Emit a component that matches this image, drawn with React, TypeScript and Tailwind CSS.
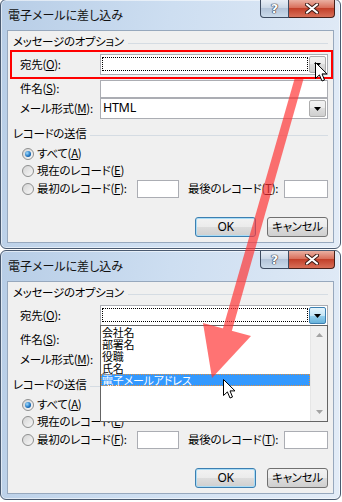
import React from 'react';

const jp = "font-['Noto_Sans_CJK_JP','Noto_Sans',sans-serif] [font-feature-settings:'palt']";

const Mn: React.FC<{ text: string; k: string; colon?: boolean }> = ({ text, k, colon = true }) => (
  <span className="whitespace-nowrap">
    {text}(<span className="underline underline-offset-[1px]">{k}</span>){colon ? ':' : ''}
  </span>
);

const DropButton: React.FC<{ pressed?: boolean }> = ({ pressed }) => (
  <div
    className={`ml-auto mr-px flex h-[17px] w-[17px] shrink-0 items-center justify-center rounded-[2px] border ${
      pressed
        ? 'border-[#3c7fb1] bg-[linear-gradient(#e5f4fc,#c4e5f6_50%,#98d1ef_50%,#68b3db)]'
        : 'border-[#acacac] bg-[linear-gradient(#f2f2f2,#ebebeb_50%,#dddddd_50%,#cfcfcf)]'
    }`}
  >
    <svg width="7" height="4" viewBox="0 0 7 4">
      <path d="M0 0h7L3.5 4z" fill="#000" />
    </svg>
  </div>
);

const Combo: React.FC<{ value?: string; focused?: boolean; pressed?: boolean; children?: React.ReactNode }> = ({
  value,
  focused,
  pressed,
  children,
}) => (
  <div className="relative flex h-[21px] flex-1 items-center border border-[#abadb3] bg-white">
    {focused && (
      <div className="absolute bottom-[3px] left-[1px] right-[19px] top-[2px] border border-dotted border-black" />
    )}
    {value && <span className="pl-[2px] font-['Noto_Sans',sans-serif] text-[12.5px] leading-none">{value}</span>}
    <DropButton pressed={pressed} />
    {children}
  </div>
);

const TextBox: React.FC<{ className?: string }> = ({ className = '' }) => (
  <div className={`h-[18px] border border-[#abadb3] bg-white ${className}`} />
);

const Radio: React.FC<{ checked?: boolean }> = ({ checked }) => (
  <span className="flex h-[12px] w-[12px] shrink-0 items-center justify-center rounded-full border border-[#8e8f8f] bg-[linear-gradient(135deg,#d4d4d4,#f8f8f8)]">
    {checked && (
      <span className="h-[6px] w-[6px] rounded-full bg-[radial-gradient(circle_at_35%_35%,#9fdcff,#1a6fbd_60%,#0b3f73)]" />
    )}
  </span>
);

const GroupHeader: React.FC<{ title: string; className?: string }> = ({ title, className = '' }) => (
  <div className={`flex h-[18px] items-center gap-[4px] ${className}`}>
    <span className="leading-none">{title}</span>
    <div className="mt-[3px] h-px flex-1 bg-[#d5dce3]" />
  </div>
);

const DropList: React.FC = () => {
  const items = ['会社名', '部署名', '役職', '氏名', '電子メールアドレス'];
  return (
    <div className="absolute left-[-1px] right-[-1px] top-full z-10 flex h-[97px] border border-[#646464] bg-white">
      <div className="flex flex-1 flex-col">
        {items.map((it, i) => (
          <div
            key={it}
            className={`flex h-[12px] items-center pl-[1px] text-[11px] leading-[12px] tracking-[-0.2px] ${
              i === 4 ? 'bg-[#3399ff] text-white outline-1 -outline-offset-1 outline-dotted outline-[#e09040]' : 'text-black'
            }`}
          >
            {it}
          </div>
        ))}
      </div>
      <div className="flex w-[17px] flex-col items-center justify-between border-l border-[#e6e6e6] bg-[#f0f0f0] py-[7px]">
        <svg width="7" height="4" viewBox="0 0 7 4">
          <path d="M0 4h7L3.5 0z" fill="#a3a3a3" />
        </svg>
        <svg width="7" height="4" viewBox="0 0 7 4">
          <path d="M0 0h7L3.5 4z" fill="#a3a3a3" />
        </svg>
      </div>
    </div>
  );
};

const Dialog: React.FC<{ open?: boolean; className?: string }> = ({ open, className = '' }) => (
  <div
    className={`flex h-[250px] w-[341px] flex-col rounded-[6px] border border-[#4a5a70] bg-[linear-gradient(100deg,#b7cde6,#cddef1_45%,#e3ecf7)] shadow-[inset_0_0_0_1px_rgba(255,255,255,0.55)] ${className}`}
  >
    <div className="flex h-[30px] shrink-0 items-center">
      <span className="pl-[7px] text-[12px] leading-none text-[#111] [font-feature-settings:'normal']">
        電子メールに差し込み
      </span>
      <div className="ml-auto mr-[5px] flex self-start">
        <div className="flex h-[18px] w-[29px] items-center justify-center rounded-bl-[4px] border border-t-0 border-[#3d4b60] bg-[linear-gradient(#e8eef6,#cbd8e7_45%,#b3c4d9_50%,#cbdbeb)]">
          <span className="font-['DejaVu_Sans',sans-serif] text-[13px] font-bold leading-none text-white [text-shadow:0_0_1px_#223,0_0_1px_#223,0_0_1px_#223]">
            ?
          </span>
        </div>
        <div className="flex h-[18px] w-[46px] items-center justify-center rounded-br-[4px] border border-l-0 border-t-0 border-[#47201a] bg-[linear-gradient(#eab0a2,#d9705c_45%,#c2402a_50%,#d86f58)]">
          <svg width="14" height="11" viewBox="0 0 14 11">
            <path d="M2 1.5l10 8M12 1.5l-10 8" stroke="#3a1a14" strokeWidth="4" strokeLinecap="round" />
            <path d="M2 1.5l10 8M12 1.5l-10 8" stroke="#fff" strokeWidth="2.2" strokeLinecap="round" />
          </svg>
        </div>
      </div>
    </div>
    <div className="ml-[6px] flex h-[213px] w-[327px] flex-col border border-[#97a8bd] bg-[#f0f0f0] px-[5px] text-[11.5px] leading-none tracking-[-0.3px] text-black">
      <GroupHeader title="メッセージのオプション" className="mt-[2px]" />
      <div className="mt-[3px] flex items-center">
        <span className="w-[87px] shrink-0 pl-[7px]">
          <Mn text="宛先" k="O" />
        </span>
        <Combo focused pressed={open}>
          {open && <DropList />}
        </Combo>
      </div>
      <div className="mt-[5px] flex items-center">
        <span className="w-[87px] shrink-0 pl-[7px]">
          <Mn text="件名" k="S" />
        </span>
        <TextBox className="flex-1" />
      </div>
      <div className="flex items-center">
        <span className="w-[87px] shrink-0 pl-[7px]">
          <Mn text="メール形式" k="M" />
        </span>
        <Combo value="HTML" />
      </div>
      <GroupHeader title="レコードの送信" className="mt-[6px]" />
      <div className="mt-[2px] flex h-[17px] items-center gap-[3px] pl-[9px]">
        <Radio checked />
        <Mn text="すべて" k="A" colon={false} />
      </div>
      <div className="flex h-[17px] items-center gap-[3px] pl-[9px]">
        <Radio />
        <Mn text="現在のレコード" k="E" colon={false} />
      </div>
      <div className="mt-px flex h-[18px] items-center pl-[9px]">
        <Radio />
        <span className="ml-[3px] w-[100px] shrink-0">
          <Mn text="最初のレコード" k="F" />
        </span>
        <TextBox className="w-[42px]" />
        <span className="ml-[9px] shrink-0">
          <Mn text="最後のレコード" k="T" />
        </span>
        <TextBox className="ml-auto w-[44px]" />
      </div>
      <div className="mt-[19px] flex justify-end gap-[11px]">
        <button className="h-[20px] w-[61px] rounded-[3px] border border-[#3c7fb1] bg-[linear-gradient(#f2f2f2,#ebebeb_50%,#dddddd_50%,#cfcfcf)] font-['Noto_Sans',sans-serif] text-[12px] leading-none shadow-[inset_0_0_0_1px_#a9dcf6]">
          OK
        </button>
        <button className="h-[20px] w-[61px] rounded-[3px] border border-[#707070] bg-[linear-gradient(#f2f2f2,#ebebeb_50%,#dddddd_50%,#cfcfcf)] leading-none">
          キャンセル
        </button>
      </div>
    </div>
  </div>
);

const Cursor: React.FC<{ className: string }> = ({ className }) => (
  <svg className={className} width="13" height="20" viewBox="0 0 13 20">
    <path
      d="M0.5 0.5L0.5 16.5L4.4 12.9L7 19L9.5 18L7 11.9L12 11.9Z"
      fill="#fff"
      stroke="#000"
      strokeWidth="1"
      strokeLinejoin="miter"
    />
  </svg>
);

export default function App() {
  return (
    <div className={`relative h-[502px] w-[342px] overflow-hidden bg-white ${jp}`}>
      <Dialog className="-mt-px" />
      <Dialog open className="mt-px" />

      {/* annotation: red frame around the 宛先 row */}
      <div className="pointer-events-none absolute left-[10px] top-[50px] z-20 h-[29px] w-[323px] border-2 border-[#ff0000]" />

      {/* annotation: arrow from the dropdown to the list item */}
      <svg className="pointer-events-none absolute inset-0 z-20" width="342" height="502" viewBox="0 0 342 502">
        <g fill="rgb(255,50,50)" opacity="0.68">
          <path d="M294.5 79L303.5 79L231.5 332L222.5 330Z" />
          <path d="M203 323L251 336L212 378Z" />
        </g>
      </svg>

      <Cursor className="pointer-events-none absolute left-[315px] top-[62px] z-30" />
      <Cursor className="pointer-events-none absolute left-[223px] top-[379px] z-30" />
    </div>
  );
}
